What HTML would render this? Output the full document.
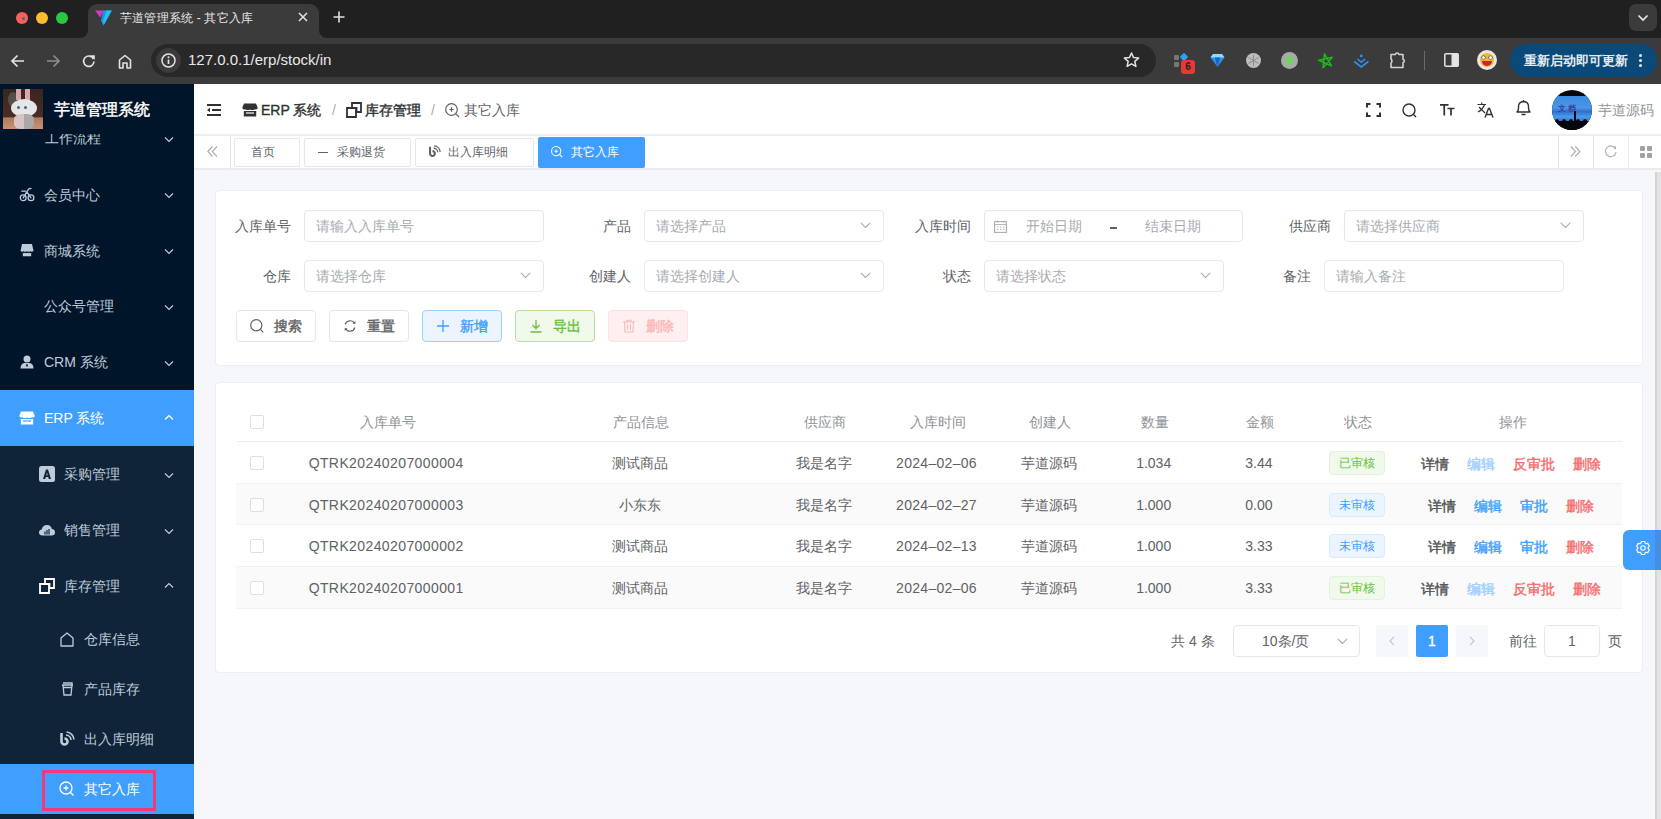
<!DOCTYPE html>
<html><head><meta charset="utf-8">
<style>
*{box-sizing:border-box;margin:0;padding:0}
html,body{width:1661px;height:819px;overflow:hidden;background:#f5f7fa;font-family:"Liberation Sans",sans-serif;font-size:14px;color:#606266}
.abs{position:absolute}
svg{display:block}
/* chrome */
#tabstrip{position:absolute;left:0;top:0;width:1661px;height:38px;background:#202020}
#toolbar{position:absolute;left:0;top:38px;width:1661px;height:46px;background:#3b3b3b}
.dot{position:absolute;width:12px;height:12px;border-radius:50%;top:12px}
#tab{position:absolute;left:88px;top:4px;width:231px;height:34px;background:#3b3b3b;border-radius:9px 9px 0 0}
#urlbar{position:absolute;left:151px;top:44px;width:1005px;height:33px;background:#282828;border-radius:17px}
/* sidebar */
#side{position:absolute;left:0;top:84px;width:194px;height:735px;background:#001529;overflow:hidden}
.mi{position:absolute;left:0;width:194px;color:#bfcbd9;font-size:14px}
.mi .t{position:absolute;white-space:nowrap}
.sub{background:#0f2438}
/* header */
#hdr{position:absolute;left:194px;top:84px;width:1467px;height:52px;background:#fff;border-bottom:2px solid #eceef2}
#tags{position:absolute;left:194px;top:136px;width:1467px;height:34px;background:#fff;border-bottom:2px solid #eaecf0}
.tag{position:absolute;top:2px;height:30px;border:1px solid #e4e7ed;border-radius:2px;font-size:12px;color:#606266;background:#fff}
.card{position:absolute;background:#fff;border:1px solid #ebeef5;border-radius:4px}
.lbl{position:absolute;font-size:14px;color:#606266;text-align:right;white-space:nowrap}
.inp{position:absolute;height:32px;border:1px solid #e4e7ed;border-radius:4px;background:#fff;font-size:14px;color:#a8abb2}
.inp .ph{position:absolute;left:11px;top:7px;white-space:nowrap}
.btn{position:absolute;top:310px;height:32px;width:80px;border:1px solid #dcdfe6;border-radius:4px;background:#fff;font-size:14px;color:#606266}
.th,.td{position:absolute;white-space:nowrap;transform:translateX(-50%);font-size:14px}
.th{color:#909399;font-weight:normal}
.td{color:#606266}
</style></head><body>

<!-- ============ CHROME ============ -->
<div id="tabstrip"></div>
<div class="dot" style="left:16px;background:#fe5f57"></div>
<div class="dot" style="left:36px;background:#febc2e"></div>
<div class="dot" style="left:56px;background:#28c840"></div>
<div id="tab"></div>
<div class="abs" style="left:80px;top:30px;width:8px;height:8px;background:#3b3b3b"></div>
<div class="abs" style="left:72px;top:22px;width:16px;height:16px;background:#202020;border-radius:0 0 8px 0"></div>
<div class="abs" style="left:319px;top:30px;width:8px;height:8px;background:#3b3b3b"></div>
<div class="abs" style="left:319px;top:22px;width:16px;height:16px;background:#202020;border-radius:0 0 0 8px"></div>
<svg class="abs" style="left:95px;top:10px" width="17" height="16" viewBox="0 0 17 16"><path d="M0 0.5H8.5L5.2 7.5Z" fill="#d43ac0"/><path d="M8 0.5H16.8L8.5 15.8L6 10.5Z" fill="#1f8fe8"/><path d="M11.5 0.5H16.8L9 14.5L7.8 12Z" fill="#27bdf5"/></svg>
<div class="abs" style="left:120px;top:10px;font-size:12px;color:#e8e8e8;white-space:nowrap;letter-spacing:0.2px">芋道管理系统 - 其它入库</div>
<svg class="abs" style="left:298px;top:12px" width="10" height="10" viewBox="0 0 10 10"><path d="M1 1L9 9M9 1L1 9" stroke="#e0e0e0" stroke-width="1.6"/></svg>
<svg class="abs" style="left:333px;top:11px" width="12" height="12" viewBox="0 0 12 12"><path d="M6 0.5V11.5M0.5 6H11.5" stroke="#e0e0e0" stroke-width="1.6"/></svg>
<div class="abs" style="left:1629px;top:4px;width:28px;height:27px;background:#3b3b3b;border-radius:7px"></div>
<svg class="abs" style="left:1637px;top:14px" width="12" height="8" viewBox="0 0 12 8"><path d="M1.5 1.5L6 6L10.5 1.5" stroke="#e8e8e8" stroke-width="1.7" fill="none"/></svg>
<div id="toolbar"></div>
<!-- nav icons -->
<svg class="abs" style="left:10px;top:54px" width="15" height="14" viewBox="0 0 15 14"><path d="M14 7H2M7.5 1.5L2 7L7.5 12.5" stroke="#e3e3e3" stroke-width="1.7" fill="none"/></svg>
<svg class="abs" style="left:46px;top:54px" width="15" height="14" viewBox="0 0 15 14"><path d="M1 7H13M7.5 1.5L13 7L7.5 12.5" stroke="#8e8e8e" stroke-width="1.7" fill="none"/></svg>
<svg class="abs" style="left:82px;top:54px" width="14" height="14" viewBox="0 0 14 14"><path d="M11.6 5.2A5.2 5.2 0 1 0 12 7.5" stroke="#e3e3e3" stroke-width="1.7" fill="none"/><path d="M8.3 1.2H12.8V5.7Z" fill="#e3e3e3"/></svg>
<svg class="abs" style="left:118px;top:54px" width="14" height="15" viewBox="0 0 14 15"><path d="M1.5 14V6L7 1.5L12.5 6V14H9V9H5V14Z" stroke="#e3e3e3" stroke-width="1.6" fill="none" stroke-linejoin="round"/></svg>
<div id="urlbar"></div>
<div class="abs" style="left:156px;top:48px;width:25px;height:25px;border-radius:50%;background:#3b3b3b"></div>
<svg class="abs" style="left:161px;top:53px" width="15" height="15" viewBox="0 0 15 15"><circle cx="7.5" cy="7.5" r="6.5" stroke="#e3e3e3" stroke-width="1.5" fill="none"/><path d="M7.5 6.5V11" stroke="#e3e3e3" stroke-width="1.7"/><circle cx="7.5" cy="4.3" r="1" fill="#e3e3e3"/></svg>
<div class="abs" style="left:188px;top:51px;font-size:15px;color:#e8e8e8;white-space:nowrap">127.0.0.1/erp/stock/in</div>
<svg class="abs" style="left:1123px;top:52px" width="17" height="16" viewBox="0 0 17 16"><path d="M8.5 1L10.6 5.6L15.6 6.1L11.8 9.4L12.9 14.4L8.5 11.8L4.1 14.4L5.2 9.4L1.4 6.1L6.4 5.6Z" stroke="#e3e3e3" stroke-width="1.5" fill="none" stroke-linejoin="round"/></svg>
<!-- extensions -->
<div class="abs" style="left:1174px;top:55px;width:5px;height:5px;background:#777;border-radius:1px"></div>
<div class="abs" style="left:1174px;top:62px;width:5px;height:5px;background:#777;border-radius:1px"></div>
<div class="abs" style="left:1181px;top:54px;width:6px;height:6px;background:#25a7f0;transform:rotate(45deg);border-radius:1px"></div>
<div class="abs" style="left:1181px;top:60px;width:14px;height:14px;background:#e53935;border-radius:3px;color:#222;font-size:10px;font-weight:bold;text-align:center;line-height:14px">6</div>
<svg class="abs" style="left:1210px;top:53px" width="15" height="15" viewBox="0 0 15 15"><path d="M3 1H12L14.5 4.5L7.5 14L0.5 4.5Z" fill="#2d8ee8"/><path d="M3 1H12L14.5 4.5H0.5Z" fill="#8fd8ff"/><path d="M7.5 14L5 4.5H10Z" fill="#1565c0"/></svg>
<div class="abs" style="left:1246px;top:53px;width:15px;height:15px;border-radius:50%;background:#bdbdbd"></div>
<svg class="abs" style="left:1246px;top:53px" width="15" height="15" viewBox="0 0 15 15"><path d="M7.5 2V13M2.5 4.5L12.5 10.5M12.5 4.5L2.5 10.5" stroke="#8a8a8a" stroke-width="1"/></svg>
<div class="abs" style="left:1281px;top:52px;width:17px;height:17px;border-radius:50%;background:#a9a9a9"></div>
<div class="abs" style="left:1285px;top:56px;width:9px;height:9px;border-radius:50%;background:#7ccc6a"></div>
<svg class="abs" style="left:1318px;top:53px" width="16" height="16" viewBox="0 0 16 16"><path d="M6.48 0.86 L13.42 12.88 L0.74 7.24 L14.32 4.35 L5.03 14.67Z" stroke="#22b51c" stroke-width="1.5" fill="none" stroke-linejoin="round"/></svg>
<svg class="abs" style="left:1353px;top:54px" width="17" height="14" viewBox="0 0 17 14"><circle cx="8.3" cy="2" r="1.4" fill="#2f8fec"/><path d="M4.5 5L8.3 8.3L12.1 5M1.2 7.5L8.3 13L15.4 7.5" stroke="#2f8fec" stroke-width="1.6" fill="none"/></svg>
<svg class="abs" style="left:1389px;top:50px" width="19" height="19" viewBox="0 0 19 19"><path d="M2 4.5H6.3A1.9 1.9 0 0 1 10 4.5H14V9.2A1.9 1.9 0 0 1 14 12.8V17.5H2V12.8A2.2 2.2 0 0 0 2 9.2Z" stroke="#d2d2d2" stroke-width="1.6" fill="none" stroke-linejoin="round"/></svg>
<div class="abs" style="left:1424px;top:51px;width:1px;height:19px;background:#6a6a6a"></div>
<svg class="abs" style="left:1444px;top:53px" width="15" height="14" viewBox="0 0 15 14"><rect x="0.8" y="0.8" width="13.4" height="12.4" rx="1" stroke="#e3e3e3" stroke-width="1.5" fill="none"/><rect x="7.5" y="0.8" width="6.7" height="12.4" fill="#e3e3e3"/></svg>
<div class="abs" style="left:1477px;top:50px;width:20px;height:20px;border-radius:50%;background:#e8e8e8"></div>
<div class="abs" style="left:1480px;top:53px;width:14px;height:14px;border-radius:50%;background:#f5b731"></div>
<div class="abs" style="left:1482px;top:61px;width:10px;height:5px;border-radius:0 0 5px 5px;background:#c62828"></div><div class="abs" style="left:1482px;top:56px;width:3px;height:3px;border-radius:50%;background:#fff;box-shadow:0 0 0 0.6px #444"></div><div class="abs" style="left:1489px;top:56px;width:3px;height:3px;border-radius:50%;background:#fff;box-shadow:0 0 0 0.6px #444"></div>
<div class="abs" style="left:1510px;top:44px;width:147px;height:33px;border-radius:17px;background:#0b4a78"></div>
<div class="abs" style="left:1524px;top:52px;font-size:13px;font-weight:bold;color:#e3ebf3;white-space:nowrap">重新启动即可更新</div>
<div class="abs" style="left:1639px;top:54px;width:3px;height:3px;border-radius:50%;background:#e8e8e8;box-shadow:0 5px 0 #e8e8e8,0 10px 0 #e8e8e8"></div>

<!-- ============ SIDEBAR ============ -->
<div id="side"></div>
<div class="abs" style="left:0;top:446px;width:194px;height:373px;background:#0f2438"></div>
<div class="abs" style="left:0;top:390px;width:194px;height:56px;background:#409eff"></div>
<div class="abs" style="left:0;top:764px;width:194px;height:50px;background:#409eff"></div>
<div class="abs" style="left:45px;top:128px;height:20px;line-height:20px;font-size:14px;color:#bfcbd9;white-space:nowrap;">工作流程</div>
<svg class="abs" style="left:164px;top:136px" width="10" height="7" viewBox="0 0 10 7"><path d="M1 1.5L5 5.5L9 1.5" stroke="#bfcbd9" stroke-width="1.2" fill="none"/></svg>
<div class="abs" style="left:0;top:84px;width:194px;height:50px;background:#001529"></div>
<div class="abs" style="left:3px;top:89px;width:40px;height:40px;background:linear-gradient(180deg,#3a2520 0%,#4a2e24 70%,#b27a5c 72%,#c99274 100%);overflow:hidden">
<div class="abs" style="left:5px;top:3px;width:10px;height:15px;border-radius:50%;background:#5a5a5a;opacity:.8"></div>
<div class="abs" style="left:13px;top:0px;width:5px;height:11px;background:#d8a6b0"></div>
<div class="abs" style="left:22px;top:0px;width:5px;height:11px;background:#d8a6b0"></div>
<div class="abs" style="left:8px;top:10px;width:26px;height:18px;border-radius:50%;background:#e6e6e6"></div>
<div class="abs" style="left:11px;top:25px;width:20px;height:15px;border-radius:35%;background:linear-gradient(90deg,#d8c3c6 50%,#a9a9a9 50%)"></div>
<div class="abs" style="left:14px;top:17px;width:3px;height:3px;border-radius:50%;background:#3a64a8"></div>
<div class="abs" style="left:21px;top:17px;width:3px;height:3px;border-radius:50%;background:#3a64a8"></div>
</div>
<div class="abs" style="left:22px;top:17px;width:3px;height:3px;border-radius:50%;background:#3a64a8"></div>
</div>
<div class="abs" style="left:54px;top:100px;height:20px;line-height:20px;font-size:16px;-webkit-text-stroke:0.45px #fff;color:#fff;white-space:nowrap">芋道管理系统</div>
<div class="abs" style="left:44px;top:184.5px;height:20px;line-height:20px;font-size:14px;color:#bfcbd9;white-space:nowrap;">会员中心</div>
<svg class="abs" style="left:19px;top:187px" width="16" height="15" viewBox="0 0 16 15"><circle cx="4.2" cy="10.8" r="2.9" stroke="#bfcbd9" stroke-width="1.3" fill="none"/><circle cx="12" cy="10.8" r="2.9" stroke="#bfcbd9" stroke-width="1.3" fill="none"/><path d="M4.2 10.8L7.8 4.8L12 10.8M7.8 4.8L9.6 2.2Q10.5 1 12 1.6M2.8 4.2H6.5" stroke="#bfcbd9" stroke-width="1.3" fill="none" stroke-linejoin="round" stroke-linecap="round"/></svg>
<svg class="abs" style="left:164px;top:192px" width="10" height="7" viewBox="0 0 10 7"><path d="M1 1.5L5 5.5L9 1.5" stroke="#bfcbd9" stroke-width="1.2" fill="none"/></svg>
<div class="abs" style="left:44px;top:240.5px;height:20px;line-height:20px;font-size:14px;color:#bfcbd9;white-space:nowrap;">商城系统</div>
<svg class="abs" style="left:20px;top:243px" width="14" height="14" viewBox="0 0 14 14"><path d="M2 1H12L13.5 8Q12 9.3 10.3 8.3Q8.6 9.3 7 8.3Q5.4 9.3 3.7 8.3Q2 9.3 0.5 8Z" fill="#bfcbd9"/><path d="M2.8 9.8Q3.7 10.5 4.8 9.8Q5.9 10.5 7 9.8Q8.1 10.5 9.2 9.8Q10.3 10.5 11.2 9.8V13.3H2.8Z" fill="#bfcbd9"/></svg>
<svg class="abs" style="left:164px;top:248px" width="10" height="7" viewBox="0 0 10 7"><path d="M1 1.5L5 5.5L9 1.5" stroke="#bfcbd9" stroke-width="1.2" fill="none"/></svg>
<div class="abs" style="left:44px;top:296px;height:20px;line-height:20px;font-size:14px;color:#bfcbd9;white-space:nowrap;">公众号管理</div>
<svg class="abs" style="left:164px;top:304px" width="10" height="7" viewBox="0 0 10 7"><path d="M1 1.5L5 5.5L9 1.5" stroke="#bfcbd9" stroke-width="1.2" fill="none"/></svg>
<div class="abs" style="left:44px;top:352px;height:20px;line-height:20px;font-size:14px;color:#bfcbd9;white-space:nowrap;">CRM 系统</div>
<svg class="abs" style="left:20px;top:355px" width="14" height="14" viewBox="0 0 14 14"><circle cx="7" cy="4" r="3.5" fill="#bfcbd9"/><path d="M0.5 13.5Q0.5 8.5 4.5 8H9.5Q13.5 8.5 13.5 13.5Z" fill="#bfcbd9"/><path d="M7 8.5L6 10.5L7 12L8 10.5Z" fill="#001529"/></svg>
<svg class="abs" style="left:164px;top:360px" width="10" height="7" viewBox="0 0 10 7"><path d="M1 1.5L5 5.5L9 1.5" stroke="#bfcbd9" stroke-width="1.2" fill="none"/></svg>
<div class="abs" style="left:44px;top:408px;height:20px;line-height:20px;font-size:14px;color:#fff;white-space:nowrap;">ERP 系统</div>
<svg class="abs" style="left:19px;top:411px" width="16" height="14" viewBox="0 0 16 14"><path d="M2 0.5H14L15.8 5Q15 7 12.5 6.5Q10 7.5 8 6.5Q6 7.5 3.5 6.5Q1 7 0.2 5Z" fill="#fff"/><path d="M1.8 8H14.2V13.5H1.8Z" fill="#fff"/><path d="M4 10H12" stroke="#409eff" stroke-width="1.2"/></svg>
<svg class="abs" style="left:164px;top:414px" width="10" height="7" viewBox="0 0 10 7"><path d="M1 5.5L5 1.5L9 5.5" stroke="#fff" stroke-width="1.2" fill="none"/></svg>
<div class="abs" style="left:64px;top:464px;height:20px;line-height:20px;font-size:14px;color:#bfcbd9;white-space:nowrap;">采购管理</div>
<svg class="abs" style="left:39px;top:466px" width="16" height="16" viewBox="0 0 16 16"><rect x="0" y="0" width="16" height="16" rx="2.5" fill="#bfcbd9"/><path d="M4 13L7 3.5H9L12 13H9.8L9.2 11H6.8L6.2 13ZM7.3 9.2H8.7L8 6.6Z" fill="#0f2438"/></svg>
<svg class="abs" style="left:164px;top:472px" width="10" height="7" viewBox="0 0 10 7"><path d="M1 1.5L5 5.5L9 1.5" stroke="#bfcbd9" stroke-width="1.2" fill="none"/></svg>
<div class="abs" style="left:64px;top:520px;height:20px;line-height:20px;font-size:14px;color:#bfcbd9;white-space:nowrap;">销售管理</div>
<svg class="abs" style="left:39px;top:524px" width="16" height="12" viewBox="0 0 16 12"><path d="M3.5 11.5Q0 11.5 0 8.5Q0 5.8 2.8 5.5Q3.5 1 8 1Q12 1 12.8 5Q16 5.3 16 8.5Q16 11.5 12.5 11.5Z" fill="#bfcbd9"/><path d="M6 10.5V7.5M8 10.5V6M10 10.5V5" stroke="#0f2438" stroke-width="1.2"/></svg>
<svg class="abs" style="left:164px;top:528px" width="10" height="7" viewBox="0 0 10 7"><path d="M1 1.5L5 5.5L9 1.5" stroke="#bfcbd9" stroke-width="1.2" fill="none"/></svg>
<div class="abs" style="left:64px;top:576px;height:20px;line-height:20px;font-size:14px;color:#bfcbd9;white-space:nowrap;">库存管理</div>
<svg class="abs" style="left:39px;top:578px" width="16" height="16" viewBox="0 0 16 16"><path d="M6 1H15V10H10.5V6H6Z" fill="none" stroke="#fff" stroke-width="1.8"/><path d="M1 6H10V15H1Z" fill="none" stroke="#fff" stroke-width="1.8"/></svg>
<svg class="abs" style="left:164px;top:582px" width="10" height="7" viewBox="0 0 10 7"><path d="M1 5.5L5 1.5L9 5.5" stroke="#bfcbd9" stroke-width="1.2" fill="none"/></svg>
<div class="abs" style="left:84px;top:629px;height:20px;line-height:20px;font-size:14px;color:#bfcbd9;white-space:nowrap;">仓库信息</div>
<svg class="abs" style="left:60px;top:632px" width="14" height="15" viewBox="0 0 14 15"><path d="M1 14V6L7 1L13 6V14Z" stroke="#bfcbd9" stroke-width="1.3" fill="none" stroke-linejoin="round"/></svg>
<div class="abs" style="left:84px;top:679px;height:20px;line-height:20px;font-size:14px;color:#bfcbd9;white-space:nowrap;">产品库存</div>
<svg class="abs" style="left:61px;top:682px" width="13" height="14" viewBox="0 0 13 14"><path d="M1 3H12M2 1H11V3M2.2 5.5H10.8M2 3L3 13H10L11 3" stroke="#bfcbd9" stroke-width="1.3" fill="none"/></svg>
<div class="abs" style="left:84px;top:729px;height:20px;line-height:20px;font-size:14px;color:#bfcbd9;white-space:nowrap;">出入库明细</div>
<svg class="abs" style="left:59px;top:731px" width="16" height="16" viewBox="0 0 16 16"><path d="M2.5 2V10.5A3 3 0 1 0 5.5 7.5" stroke="#bfcbd9" stroke-width="2.6" fill="none"/><path d="M7 4A5 5 0 0 1 12 9M7.5 1A8 8 0 0 1 15 8.5" stroke="#bfcbd9" stroke-width="1.6" fill="none"/></svg>
<div class="abs" style="left:84px;top:779px;height:20px;line-height:20px;font-size:14px;color:#fff;white-space:nowrap;">其它入库</div>
<svg class="abs" style="left:59px;top:781px" width="16" height="16" viewBox="0 0 16 16"><circle cx="7" cy="7" r="6" stroke="#fff" stroke-width="1.3" fill="none"/><path d="M7 4.5V9.5M4.5 7H9.5M11.3 11.3L14.5 14.5" stroke="#fff" stroke-width="1.3"/></svg>
<div class="abs" style="left:42px;top:770px;width:114px;height:41px;border:3px solid #f23a7b"></div>

<!-- ============ HEADER ============ -->
<div id="hdr"></div>
<svg class="abs" style="left:207px;top:104px" width="14" height="12" viewBox="0 0 14 12"><path d="M0 1H14M5 6H14M0 11H14" stroke="#303133" stroke-width="1.8"/><path d="M0 6L3 3.8V8.2Z" fill="#303133"/></svg>
<svg class="abs" style="left:242px;top:103px" width="16" height="14" viewBox="0 0 16 14"><path d="M2 0.5H14L15.8 5Q15 7 12.5 6.5Q10 7.5 8 6.5Q6 7.5 3.5 6.5Q1 7 0.2 5Z" fill="#303133"/><path d="M1.8 8H14.2V13.5H1.8Z" fill="#303133"/><path d="M4 10H12" stroke="#fff" stroke-width="1.2"/></svg>
<div class="abs" style="left:261px;top:100px;height:20px;line-height:20px;font-size:14px;-webkit-text-stroke:0.35px #303133;color:#303133;white-space:nowrap">ERP 系统</div>
<div class="abs" style="left:332px;top:100px;height:20px;line-height:20px;font-size:14px;color:#a8abb2">/</div>
<svg class="abs" style="left:346px;top:102px" width="16" height="16" viewBox="0 0 16 16"><path d="M6 1H15V10H10.5V6H6Z" fill="none" stroke="#303133" stroke-width="1.8"/><path d="M1 6H10V15H1Z" fill="none" stroke="#303133" stroke-width="1.8"/></svg>
<div class="abs" style="left:365px;top:100px;height:20px;line-height:20px;font-size:14px;-webkit-text-stroke:0.4px #303133;color:#303133;white-space:nowrap">库存管理</div>
<div class="abs" style="left:431px;top:100px;height:20px;line-height:20px;font-size:14px;color:#a8abb2">/</div>
<svg class="abs" style="left:445px;top:103px" width="15" height="15" viewBox="0 0 15 15"><circle cx="6.5" cy="6.5" r="5.8" stroke="#606266" stroke-width="1.2" fill="none"/><path d="M6.5 4.3V8.7M4.3 6.5H8.7M10.6 10.6L14 14" stroke="#606266" stroke-width="1.2"/></svg>
<div class="abs" style="left:464px;top:100px;height:20px;line-height:20px;font-size:14px;color:#606266;white-space:nowrap">其它入库</div>
<svg class="abs" style="left:1366px;top:103px" width="15" height="14" viewBox="0 0 15 14"><path d="M1 4.5V1H4.5M10.5 1H14V4.5M14 9.5V13H10.5M4.5 13H1V9.5" stroke="#303133" stroke-width="2" fill="none"/></svg>
<svg class="abs" style="left:1402px;top:103px" width="15" height="15" viewBox="0 0 15 15"><circle cx="7" cy="7" r="6" stroke="#303133" stroke-width="1.4" fill="none"/><path d="M11.2 11.2L14 14" stroke="#303133" stroke-width="1.4"/></svg>
<svg class="abs" style="left:1440px;top:104px" width="15" height="12" viewBox="0 0 15 12"><path d="M0 0.8H8.5M4.25 0.8V11.5M7.5 4.5H14.5M11 4.5V11.5" stroke="#303133" stroke-width="1.7" fill="none"/></svg>
<svg class="abs" style="left:1477px;top:102px" width="17" height="16" viewBox="0 0 17 16"><path d="M0.5 2.5H9M4.7 0.5V2.5M2 5L8 11M7.5 2.5Q6 7.5 1 10" stroke="#303133" stroke-width="1.2" fill="none"/><path d="M8 15.5L11.5 6.5H12.5L16 15.5M9.3 12.5H14.7" stroke="#303133" stroke-width="1.4" fill="none"/></svg>
<svg class="abs" style="left:1516px;top:99px" width="15" height="17" viewBox="0 0 15 17"><path d="M7.5 1V2.5M1 13H14Q12.5 11.5 12.5 9V7.5Q12.5 3 7.5 2.5Q2.5 3 2.5 7.5V9Q2.5 11.5 1 13ZM5.5 15.5H9.5" stroke="#303133" stroke-width="1.4" fill="none" stroke-linejoin="round"/></svg>
<div class="abs" style="left:1552px;top:90px;width:40px;height:40px;border-radius:50%;overflow:hidden;background:#05070d">
<div class="abs" style="left:0;top:6px;width:40px;height:26px;background:linear-gradient(180deg,#3a8be0 0%,#4b97e6 45%,#2f6fcf 60%,#4a9be8 80%,#2a6ccc 100%)"></div>
<div class="abs" style="left:6px;top:14px;font-size:7.5px;line-height:9px;color:#3b3f9c;font-weight:bold;white-space:nowrap">文 档</div>
<div class="abs" style="left:-2px;top:31px;width:44px;height:12px;background:#05070d"></div>
<div class="abs" style="left:3px;top:28.5px;width:4px;height:5px;border-radius:50% 50% 0 0;background:#05070d;box-shadow:7px 0 0 #05070d,14px 0 0 #05070d,21px 0 0 #05070d,28px 0 0 #05070d"></div>
<div class="abs" style="left:22px;top:21px;width:2px;height:10px;background:#05070d"></div>
</div>
</div>
<div class="abs" style="left:1598px;top:100px;height:20px;line-height:20px;font-size:14px;color:#909399;white-space:nowrap">芋道源码</div>
<div id="tags"></div>
<svg class="abs" style="left:207px;top:146px" width="11" height="11" viewBox="0 0 11 11"><path d="M5.5 0.5L0.8 5.5L5.5 10.5M10 0.5L5.3 5.5L10 10.5" stroke="#a8abb2" stroke-width="1.1" fill="none"/></svg>
<div class="abs" style="left:230px;top:135px;width:1px;height:34px;background:#e4e7ed"></div>
<div class="tag" style="left:234px;top:138px;width:66px;height:29px"></div>
<div class="abs" style="left:251px;top:144px;height:17px;line-height:17px;font-size:12px;color:#606266;white-space:nowrap">首页</div>
<div class="tag" style="left:304px;top:138px;width:107px;height:29px"></div>
<div class="abs" style="left:318px;top:152px;width:10px;height:1.2px;background:#606266"></div>
<div class="abs" style="left:337px;top:144px;height:17px;line-height:17px;font-size:12px;color:#606266;white-space:nowrap">采购退货</div>
<div class="tag" style="left:415px;top:138px;width:119px;height:29px"></div>
<svg class="abs" style="left:428px;top:145px" width="13" height="13" viewBox="0 0 16 16"><path d="M2.5 2V10.5A3 3 0 1 0 5.5 7.5" stroke="#606266" stroke-width="2.6" fill="none"/><path d="M7 4A5 5 0 0 1 12 9M7.5 1A8 8 0 0 1 15 8.5" stroke="#606266" stroke-width="1.6" fill="none"/></svg>
<div class="abs" style="left:448px;top:144px;height:17px;line-height:17px;font-size:12px;color:#606266;white-space:nowrap">出入库明细</div>
<div class="abs" style="left:538px;top:137px;width:107px;height:31px;background:#409eff;border-radius:2px"></div>
<svg class="abs" style="left:551px;top:146px" width="12" height="12" viewBox="0 0 15 15"><circle cx="6.5" cy="6.5" r="5.8" stroke="#fff" stroke-width="1.3" fill="none"/><path d="M6.5 4.3V8.7M4.3 6.5H8.7M10.6 10.6L14 14" stroke="#fff" stroke-width="1.3"/></svg>
<div class="abs" style="left:571px;top:144px;height:17px;line-height:17px;font-size:12px;color:#fff;white-space:nowrap">其它入库</div>
<div class="abs" style="left:1558px;top:135px;width:1px;height:34px;background:#e4e7ed"></div>
<div class="abs" style="left:1593px;top:135px;width:1px;height:34px;background:#e4e7ed"></div>
<div class="abs" style="left:1628px;top:135px;width:1px;height:34px;background:#e4e7ed"></div>
<svg class="abs" style="left:1570px;top:146px" width="11" height="11" viewBox="0 0 11 11"><path d="M0.8 0.5L5.5 5.5L0.8 10.5M5.3 0.5L10 5.5L5.3 10.5" stroke="#a8abb2" stroke-width="1.1" fill="none"/></svg>
<svg class="abs" style="left:1604px;top:145px" width="13" height="13" viewBox="0 0 13 13"><path d="M11.5 4A5.3 5.3 0 1 0 12 7" stroke="#b4b7bd" stroke-width="1.3" fill="none"/><path d="M9.5 1.5L12 1.5L12 4.5Z" fill="#a8abb2"/></svg>
<svg class="abs" style="left:1640px;top:146px" width="12" height="12" viewBox="0 0 12 12"><rect x="0" y="0" width="5" height="5" rx="1" fill="#9fa2a7"/><rect x="7" y="0" width="5" height="5" rx="1" fill="#9fa2a7"/><rect x="0" y="7" width="5" height="5" rx="1" fill="#9fa2a7"/><rect x="7" y="7" width="5" height="5" rx="1" fill="#9fa2a7"/></svg>

<!-- ============ SEARCH CARD ============ -->
<div class="card" style="left:215px;top:190px;width:1428px;height:176px"></div>
<div class="abs" style="left:191px;width:100px;top:216px;height:20px;line-height:20px;text-align:right;font-size:14px;color:#606266;white-space:nowrap">入库单号</div>
<div class="inp" style="left:304px;top:210px;width:240px"></div><div class="abs" style="left:316px;top:216px;height:20px;line-height:20px;font-size:14px;color:#a8abb2;white-space:nowrap">请输入入库单号</div>
<div class="abs" style="left:531px;width:100px;top:216px;height:20px;line-height:20px;text-align:right;font-size:14px;color:#606266;white-space:nowrap">产品</div>
<div class="inp" style="left:644px;top:210px;width:240px"></div><div class="abs" style="left:656px;top:216px;height:20px;line-height:20px;font-size:14px;color:#a8abb2;white-space:nowrap">请选择产品</div><svg class="abs" style="left:860px;top:222px" width="11" height="7" viewBox="0 0 11 7"><path d="M0.8 0.8L5.5 5.5L10.2 0.8" stroke="#a8abb2" stroke-width="1.1" fill="none"/></svg>
<div class="abs" style="left:871px;width:100px;top:216px;height:20px;line-height:20px;text-align:right;font-size:14px;color:#606266;white-space:nowrap">入库时间</div>
<div class="inp" style="left:984px;top:210px;width:259px"></div>
<svg class="abs" style="left:994px;top:220px" width="13" height="13" viewBox="0 0 13 13"><rect x="0.6" y="1.6" width="11.8" height="10.8" stroke="#a8abb2" stroke-width="1.1" fill="none"/><path d="M0.6 4.5H12.4M3.5 0.5V2.5M9.5 0.5V2.5M3 7H4.5M6 7H7.5M9 7H10.5M3 9.5H4.5M6 9.5H7.5M9 9.5H10.5" stroke="#a8abb2" stroke-width="0.9"/></svg>
<div class="abs" style="left:1026px;top:216px;height:20px;line-height:20px;font-size:14px;color:#a8abb2;white-space:nowrap">开始日期</div>
<div class="abs" style="left:1110px;top:227px;width:7px;height:1.6px;background:#606266"></div>
<div class="abs" style="left:1145px;top:216px;height:20px;line-height:20px;font-size:14px;color:#a8abb2;white-space:nowrap">结束日期</div>
<div class="abs" style="left:1231px;width:100px;top:216px;height:20px;line-height:20px;text-align:right;font-size:14px;color:#606266;white-space:nowrap">供应商</div>
<div class="inp" style="left:1344px;top:210px;width:240px"></div><div class="abs" style="left:1356px;top:216px;height:20px;line-height:20px;font-size:14px;color:#a8abb2;white-space:nowrap">请选择供应商</div><svg class="abs" style="left:1560px;top:222px" width="11" height="7" viewBox="0 0 11 7"><path d="M0.8 0.8L5.5 5.5L10.2 0.8" stroke="#a8abb2" stroke-width="1.1" fill="none"/></svg>
<div class="abs" style="left:191px;width:100px;top:266px;height:20px;line-height:20px;text-align:right;font-size:14px;color:#606266;white-space:nowrap">仓库</div>
<div class="inp" style="left:304px;top:260px;width:240px"></div><div class="abs" style="left:316px;top:266px;height:20px;line-height:20px;font-size:14px;color:#a8abb2;white-space:nowrap">请选择仓库</div><svg class="abs" style="left:520px;top:272px" width="11" height="7" viewBox="0 0 11 7"><path d="M0.8 0.8L5.5 5.5L10.2 0.8" stroke="#a8abb2" stroke-width="1.1" fill="none"/></svg>
<div class="abs" style="left:531px;width:100px;top:266px;height:20px;line-height:20px;text-align:right;font-size:14px;color:#606266;white-space:nowrap">创建人</div>
<div class="inp" style="left:644px;top:260px;width:240px"></div><div class="abs" style="left:656px;top:266px;height:20px;line-height:20px;font-size:14px;color:#a8abb2;white-space:nowrap">请选择创建人</div><svg class="abs" style="left:860px;top:272px" width="11" height="7" viewBox="0 0 11 7"><path d="M0.8 0.8L5.5 5.5L10.2 0.8" stroke="#a8abb2" stroke-width="1.1" fill="none"/></svg>
<div class="abs" style="left:871px;width:100px;top:266px;height:20px;line-height:20px;text-align:right;font-size:14px;color:#606266;white-space:nowrap">状态</div>
<div class="inp" style="left:984px;top:260px;width:240px"></div><div class="abs" style="left:996px;top:266px;height:20px;line-height:20px;font-size:14px;color:#a8abb2;white-space:nowrap">请选择状态</div><svg class="abs" style="left:1200px;top:272px" width="11" height="7" viewBox="0 0 11 7"><path d="M0.8 0.8L5.5 5.5L10.2 0.8" stroke="#a8abb2" stroke-width="1.1" fill="none"/></svg>
<div class="abs" style="left:1211px;width:100px;top:266px;height:20px;line-height:20px;text-align:right;font-size:14px;color:#606266;white-space:nowrap">备注</div>
<div class="inp" style="left:1324px;top:260px;width:240px"></div><div class="abs" style="left:1336px;top:266px;height:20px;line-height:20px;font-size:14px;color:#a8abb2;white-space:nowrap">请输入备注</div>
<div class="abs" style="left:236px;top:310px;width:80px;height:32px;background:#fff;border:1px solid #e2e5ea;border-radius:4px"></div><svg class="abs" style="left:250px;top:319px" width="14" height="14" viewBox="0 0 14 14"><circle cx="6.3" cy="6.3" r="5.6" stroke="#606266" stroke-width="1.2" fill="none"/><path d="M10.3 10.3L13.3 13.3" stroke="#606266" stroke-width="1.2"/></svg><div class="abs" style="left:274px;top:316px;height:20px;line-height:20px;font-size:14px;color:#606266;white-space:nowrap;-webkit-text-stroke:0.4px #606266">搜索</div>
<div class="abs" style="left:329px;top:310px;width:80px;height:32px;background:#fff;border:1px solid #e2e5ea;border-radius:4px"></div><svg class="abs" style="left:343px;top:319px" width="14" height="14" viewBox="0 0 14 14"><path d="M2.2 5.5A5 5 0 0 1 11.5 4.5M11.8 8.5A5 5 0 0 1 2.5 9.5" stroke="#606266" stroke-width="1.2" fill="none"/><path d="M9.5 4.8H12.3V2Z" fill="#606266"/><path d="M4.5 9.2H1.7V12Z" fill="#606266"/></svg><div class="abs" style="left:367px;top:316px;height:20px;line-height:20px;font-size:14px;color:#606266;white-space:nowrap;-webkit-text-stroke:0.4px #606266">重置</div>
<div class="abs" style="left:422px;top:310px;width:80px;height:32px;background:#ecf5ff;border:1px solid #a0cfff;border-radius:4px"></div><svg class="abs" style="left:436px;top:319px" width="14" height="14" viewBox="0 0 14 14"><path d="M7 1V13M1 7H13" stroke="#409eff" stroke-width="1.3"/></svg><div class="abs" style="left:460px;top:316px;height:20px;line-height:20px;font-size:14px;color:#409eff;white-space:nowrap;-webkit-text-stroke:0.4px #409eff">新增</div>
<div class="abs" style="left:515px;top:310px;width:80px;height:32px;background:#f0f9eb;border:1px solid #b3e19d;border-radius:4px"></div><svg class="abs" style="left:529px;top:319px" width="14" height="14" viewBox="0 0 14 14"><path d="M7 1V9.5M3.5 6L7 9.5L10.5 6M1.5 13H12.5" stroke="#67c23a" stroke-width="1.3" fill="none"/></svg><div class="abs" style="left:553px;top:316px;height:20px;line-height:20px;font-size:14px;color:#67c23a;white-space:nowrap;-webkit-text-stroke:0.4px #67c23a">导出</div>
<div class="abs" style="left:608px;top:310px;width:80px;height:32px;background:#fef0f0;border:1px solid #fde2e2;border-radius:4px"></div><svg class="abs" style="left:622px;top:319px" width="14" height="14" viewBox="0 0 14 14"><path d="M1 3H13M5 3V1.2H9V3M2.5 3L3 13H11L11.5 3M5.5 5.5V10.5M8.5 5.5V10.5" stroke="#fab6b6" stroke-width="1.1" fill="none"/></svg><div class="abs" style="left:646px;top:316px;height:20px;line-height:20px;font-size:14px;color:#fab6b6;white-space:nowrap;-webkit-text-stroke:0.4px #fab6b6">删除</div>

<!-- ============ TABLE CARD ============ -->
<div class="card" style="left:215px;top:382px;width:1428px;height:291px"></div>
<div class="abs" style="left:236px;top:441px;width:1386px;height:1px;background:#ebeef5"></div>
<div class="abs" style="left:236px;top:442px;width:1386px;height:41.67px;background:#fff;border-bottom:1px solid #f0f2f5"></div>
<div class="abs" style="left:236px;top:483.67px;width:1386px;height:41.67px;background:#fafafa;border-bottom:1px solid #f0f2f5"></div>
<div class="abs" style="left:236px;top:525.33px;width:1386px;height:41.67px;background:#fff;border-bottom:1px solid #f0f2f5"></div>
<div class="abs" style="left:236px;top:567px;width:1386px;height:41.67px;background:#fafafa;border-bottom:1px solid #f0f2f5"></div>
<div class="abs" style="left:250px;top:415px;width:14px;height:14px;border:1px solid #dcdfe6;border-radius:2px;background:#fff"></div>
<div class="abs" style="left:237.5px;width:300px;top:412px;height:20px;line-height:20px;text-align:center;font-size:14px;color:#909399;white-space:nowrap;">入库单号</div>
<div class="abs" style="left:490.5px;width:300px;top:412px;height:20px;line-height:20px;text-align:center;font-size:14px;color:#909399;white-space:nowrap;">产品信息</div>
<div class="abs" style="left:675px;width:300px;top:412px;height:20px;line-height:20px;text-align:center;font-size:14px;color:#909399;white-space:nowrap;">供应商</div>
<div class="abs" style="left:787.5px;width:300px;top:412px;height:20px;line-height:20px;text-align:center;font-size:14px;color:#909399;white-space:nowrap;">入库时间</div>
<div class="abs" style="left:899.5px;width:300px;top:412px;height:20px;line-height:20px;text-align:center;font-size:14px;color:#909399;white-space:nowrap;">创建人</div>
<div class="abs" style="left:1005px;width:300px;top:412px;height:20px;line-height:20px;text-align:center;font-size:14px;color:#909399;white-space:nowrap;">数量</div>
<div class="abs" style="left:1110px;width:300px;top:412px;height:20px;line-height:20px;text-align:center;font-size:14px;color:#909399;white-space:nowrap;">金额</div>
<div class="abs" style="left:1207.5px;width:300px;top:412px;height:20px;line-height:20px;text-align:center;font-size:14px;color:#909399;white-space:nowrap;">状态</div>
<div class="abs" style="left:1362.5px;width:300px;top:412px;height:20px;line-height:20px;text-align:center;font-size:14px;color:#909399;white-space:nowrap;">操作</div>
<div class="abs" style="left:250px;top:456px;width:14px;height:14px;border:1px solid #dcdfe6;border-radius:2px;background:#fff"></div>
<div class="abs" style="left:236.2px;width:300px;top:453px;height:20px;line-height:20px;text-align:center;font-size:14px;color:#606266;white-space:nowrap;letter-spacing:0.4px">QTRK20240207000004</div>
<div class="abs" style="left:489.5px;width:300px;top:453px;height:20px;line-height:20px;text-align:center;font-size:14px;color:#606266;white-space:nowrap;">测试商品</div>
<div class="abs" style="left:674px;width:300px;top:453px;height:20px;line-height:20px;text-align:center;font-size:14px;color:#606266;white-space:nowrap;">我是名字</div>
<div class="abs" style="left:786.5px;width:300px;top:453px;height:20px;line-height:20px;text-align:center;font-size:14px;color:#606266;white-space:nowrap;letter-spacing:0.3px">2024–02–06</div>
<div class="abs" style="left:898.8px;width:300px;top:453px;height:20px;line-height:20px;text-align:center;font-size:14px;color:#606266;white-space:nowrap;">芋道源码</div>
<div class="abs" style="left:1003.7px;width:300px;top:453px;height:20px;line-height:20px;text-align:center;font-size:14px;color:#606266;white-space:nowrap;">1.034</div>
<div class="abs" style="left:1108.9px;width:300px;top:453px;height:20px;line-height:20px;text-align:center;font-size:14px;color:#606266;white-space:nowrap;">3.44</div>
<div class="abs" style="left:1328.5px;top:451px;width:56px;height:24px;background:#f0f9eb;border:1px solid #e1f3d8;border-radius:4px;text-align:center;line-height:22px;font-size:12px;color:#67c23a">已审核</div>
<div class="abs" style="left:1285px;width:300px;top:454px;height:20px;line-height:20px;text-align:center;font-size:14px;color:#515357;white-space:nowrap;-webkit-text-stroke:0.4px #515357">详情</div>
<div class="abs" style="left:1331px;width:300px;top:454px;height:20px;line-height:20px;text-align:center;font-size:14px;color:#a0cfff;white-space:nowrap;-webkit-text-stroke:0.4px #a0cfff">编辑</div>
<div class="abs" style="left:1384px;width:300px;top:454px;height:20px;line-height:20px;text-align:center;font-size:14px;color:#f56c6c;white-space:nowrap;-webkit-text-stroke:0.4px #f56c6c">反审批</div>
<div class="abs" style="left:1437px;width:300px;top:454px;height:20px;line-height:20px;text-align:center;font-size:14px;color:#f56c6c;white-space:nowrap;-webkit-text-stroke:0.4px #f56c6c">删除</div>
<div class="abs" style="left:250px;top:497.67px;width:14px;height:14px;border:1px solid #dcdfe6;border-radius:2px;background:#fff"></div>
<div class="abs" style="left:236.2px;width:300px;top:494.67px;height:20px;line-height:20px;text-align:center;font-size:14px;color:#606266;white-space:nowrap;letter-spacing:0.4px">QTRK20240207000003</div>
<div class="abs" style="left:489.5px;width:300px;top:494.67px;height:20px;line-height:20px;text-align:center;font-size:14px;color:#606266;white-space:nowrap;">小东东</div>
<div class="abs" style="left:674px;width:300px;top:494.67px;height:20px;line-height:20px;text-align:center;font-size:14px;color:#606266;white-space:nowrap;">我是名字</div>
<div class="abs" style="left:786.5px;width:300px;top:494.67px;height:20px;line-height:20px;text-align:center;font-size:14px;color:#606266;white-space:nowrap;letter-spacing:0.3px">2024–02–27</div>
<div class="abs" style="left:898.8px;width:300px;top:494.67px;height:20px;line-height:20px;text-align:center;font-size:14px;color:#606266;white-space:nowrap;">芋道源码</div>
<div class="abs" style="left:1003.7px;width:300px;top:494.67px;height:20px;line-height:20px;text-align:center;font-size:14px;color:#606266;white-space:nowrap;">1.000</div>
<div class="abs" style="left:1108.9px;width:300px;top:494.67px;height:20px;line-height:20px;text-align:center;font-size:14px;color:#606266;white-space:nowrap;">0.00</div>
<div class="abs" style="left:1328.5px;top:492.67px;width:56px;height:24px;background:#ecf5ff;border:1px solid #d9ecff;border-radius:4px;text-align:center;line-height:22px;font-size:12px;color:#409eff">未审核</div>
<div class="abs" style="left:1292px;width:300px;top:495.67px;height:20px;line-height:20px;text-align:center;font-size:14px;color:#515357;white-space:nowrap;-webkit-text-stroke:0.4px #515357">详情</div>
<div class="abs" style="left:1338px;width:300px;top:495.67px;height:20px;line-height:20px;text-align:center;font-size:14px;color:#409eff;white-space:nowrap;-webkit-text-stroke:0.4px #409eff">编辑</div>
<div class="abs" style="left:1384px;width:300px;top:495.67px;height:20px;line-height:20px;text-align:center;font-size:14px;color:#409eff;white-space:nowrap;-webkit-text-stroke:0.4px #409eff">审批</div>
<div class="abs" style="left:1430px;width:300px;top:495.67px;height:20px;line-height:20px;text-align:center;font-size:14px;color:#f56c6c;white-space:nowrap;-webkit-text-stroke:0.4px #f56c6c">删除</div>
<div class="abs" style="left:250px;top:539.33px;width:14px;height:14px;border:1px solid #dcdfe6;border-radius:2px;background:#fff"></div>
<div class="abs" style="left:236.2px;width:300px;top:536.33px;height:20px;line-height:20px;text-align:center;font-size:14px;color:#606266;white-space:nowrap;letter-spacing:0.4px">QTRK20240207000002</div>
<div class="abs" style="left:489.5px;width:300px;top:536.33px;height:20px;line-height:20px;text-align:center;font-size:14px;color:#606266;white-space:nowrap;">测试商品</div>
<div class="abs" style="left:674px;width:300px;top:536.33px;height:20px;line-height:20px;text-align:center;font-size:14px;color:#606266;white-space:nowrap;">我是名字</div>
<div class="abs" style="left:786.5px;width:300px;top:536.33px;height:20px;line-height:20px;text-align:center;font-size:14px;color:#606266;white-space:nowrap;letter-spacing:0.3px">2024–02–13</div>
<div class="abs" style="left:898.8px;width:300px;top:536.33px;height:20px;line-height:20px;text-align:center;font-size:14px;color:#606266;white-space:nowrap;">芋道源码</div>
<div class="abs" style="left:1003.7px;width:300px;top:536.33px;height:20px;line-height:20px;text-align:center;font-size:14px;color:#606266;white-space:nowrap;">1.000</div>
<div class="abs" style="left:1108.9px;width:300px;top:536.33px;height:20px;line-height:20px;text-align:center;font-size:14px;color:#606266;white-space:nowrap;">3.33</div>
<div class="abs" style="left:1328.5px;top:534.33px;width:56px;height:24px;background:#ecf5ff;border:1px solid #d9ecff;border-radius:4px;text-align:center;line-height:22px;font-size:12px;color:#409eff">未审核</div>
<div class="abs" style="left:1292px;width:300px;top:537.33px;height:20px;line-height:20px;text-align:center;font-size:14px;color:#515357;white-space:nowrap;-webkit-text-stroke:0.4px #515357">详情</div>
<div class="abs" style="left:1338px;width:300px;top:537.33px;height:20px;line-height:20px;text-align:center;font-size:14px;color:#409eff;white-space:nowrap;-webkit-text-stroke:0.4px #409eff">编辑</div>
<div class="abs" style="left:1384px;width:300px;top:537.33px;height:20px;line-height:20px;text-align:center;font-size:14px;color:#409eff;white-space:nowrap;-webkit-text-stroke:0.4px #409eff">审批</div>
<div class="abs" style="left:1430px;width:300px;top:537.33px;height:20px;line-height:20px;text-align:center;font-size:14px;color:#f56c6c;white-space:nowrap;-webkit-text-stroke:0.4px #f56c6c">删除</div>
<div class="abs" style="left:250px;top:581px;width:14px;height:14px;border:1px solid #dcdfe6;border-radius:2px;background:#fff"></div>
<div class="abs" style="left:236.2px;width:300px;top:578px;height:20px;line-height:20px;text-align:center;font-size:14px;color:#606266;white-space:nowrap;letter-spacing:0.4px">QTRK20240207000001</div>
<div class="abs" style="left:489.5px;width:300px;top:578px;height:20px;line-height:20px;text-align:center;font-size:14px;color:#606266;white-space:nowrap;">测试商品</div>
<div class="abs" style="left:674px;width:300px;top:578px;height:20px;line-height:20px;text-align:center;font-size:14px;color:#606266;white-space:nowrap;">我是名字</div>
<div class="abs" style="left:786.5px;width:300px;top:578px;height:20px;line-height:20px;text-align:center;font-size:14px;color:#606266;white-space:nowrap;letter-spacing:0.3px">2024–02–06</div>
<div class="abs" style="left:898.8px;width:300px;top:578px;height:20px;line-height:20px;text-align:center;font-size:14px;color:#606266;white-space:nowrap;">芋道源码</div>
<div class="abs" style="left:1003.7px;width:300px;top:578px;height:20px;line-height:20px;text-align:center;font-size:14px;color:#606266;white-space:nowrap;">1.000</div>
<div class="abs" style="left:1108.9px;width:300px;top:578px;height:20px;line-height:20px;text-align:center;font-size:14px;color:#606266;white-space:nowrap;">3.33</div>
<div class="abs" style="left:1328.5px;top:576px;width:56px;height:24px;background:#f0f9eb;border:1px solid #e1f3d8;border-radius:4px;text-align:center;line-height:22px;font-size:12px;color:#67c23a">已审核</div>
<div class="abs" style="left:1285px;width:300px;top:579px;height:20px;line-height:20px;text-align:center;font-size:14px;color:#515357;white-space:nowrap;-webkit-text-stroke:0.4px #515357">详情</div>
<div class="abs" style="left:1331px;width:300px;top:579px;height:20px;line-height:20px;text-align:center;font-size:14px;color:#a0cfff;white-space:nowrap;-webkit-text-stroke:0.4px #a0cfff">编辑</div>
<div class="abs" style="left:1384px;width:300px;top:579px;height:20px;line-height:20px;text-align:center;font-size:14px;color:#f56c6c;white-space:nowrap;-webkit-text-stroke:0.4px #f56c6c">反审批</div>
<div class="abs" style="left:1437px;width:300px;top:579px;height:20px;line-height:20px;text-align:center;font-size:14px;color:#f56c6c;white-space:nowrap;-webkit-text-stroke:0.4px #f56c6c">删除</div>
<div class="abs" style="left:1171px;top:631px;height:20px;line-height:20px;font-size:14px;color:#606266;white-space:nowrap">共 4 条</div>
<div class="abs" style="left:1233px;top:625px;width:127px;height:32px;border:1px solid #e4e7ed;border-radius:4px;background:#fff"></div>
<div class="abs" style="left:1262px;top:631px;height:20px;line-height:20px;font-size:14px;color:#606266;white-space:nowrap">10条/页</div>
<svg class="abs" style="left:1337px;top:638px" width="11" height="7" viewBox="0 0 11 7"><path d="M0.8 0.8L5.5 5.5L10.2 0.8" stroke="#a8abb2" stroke-width="1.1" fill="none"/></svg>
<div class="abs" style="left:1376px;top:625px;width:32px;height:32px;background:#f5f7fa;border-radius:2px"></div>
<svg class="abs" style="left:1389px;top:636px" width="6" height="10" viewBox="0 0 6 10"><path d="M5 0.8L1 5L5 9.2" stroke="#c0c4cc" stroke-width="1.1" fill="none"/></svg>
<div class="abs" style="left:1416px;top:625px;width:32px;height:32px;background:#409eff;border-radius:2px;color:#fff;text-align:center;line-height:32px;font-size:14px;-webkit-text-stroke:0.3px #fff">1</div>
<div class="abs" style="left:1456px;top:625px;width:32px;height:32px;background:#f5f7fa;border-radius:2px"></div>
<svg class="abs" style="left:1469px;top:636px" width="6" height="10" viewBox="0 0 6 10"><path d="M1 0.8L5 5L1 9.2" stroke="#c0c4cc" stroke-width="1.1" fill="none"/></svg>
<div class="abs" style="left:1509px;top:631px;height:20px;line-height:20px;font-size:14px;color:#606266;white-space:nowrap">前往</div>
<div class="abs" style="left:1544px;top:625px;width:56px;height:32px;border:1px solid #e4e7ed;border-radius:4px;background:#fff;text-align:center;line-height:30px;font-size:14px;color:#606266">1</div>
<div class="abs" style="left:1608px;top:631px;height:20px;line-height:20px;font-size:14px;color:#606266;white-space:nowrap">页</div>
<div class="abs" style="left:1655px;top:172px;width:6px;height:647px;background:linear-gradient(90deg,#d4d4d7 0,#d4d4d7 2px,#e2e2e5 2px)"></div>
<div class="abs" style="left:1623px;top:530px;width:38px;height:40px;background:#409eff;border-radius:6px 0 0 6px"></div>
<svg class="abs" style="left:1635px;top:540px" width="16" height="16" viewBox="0 0 24 24"><path d="M8.67 5.17 L9.58 2.30 L14.42 2.30 L15.33 5.17 L16.25 5.70 L19.19 5.05 L21.61 9.24 L19.58 11.47 L19.58 12.53 L21.61 14.76 L19.19 18.95 L16.25 18.30 L15.33 18.83 L14.42 21.70 L9.58 21.70 L8.67 18.83 L7.75 18.30 L4.81 18.95 L2.39 14.76 L4.42 12.53 L4.42 11.47 L2.39 9.24 L4.81 5.05 L7.75 5.70Z" stroke="#fff" stroke-width="1.7" fill="none" stroke-linejoin="round"/><circle cx="12" cy="12" r="3.3" stroke="#fff" stroke-width="1.7" fill="none"/></svg><div class="abs" style="left:1655px;top:530px;width:6px;height:40px;background:rgba(90,90,110,0.22)"></div>

</body></html>
